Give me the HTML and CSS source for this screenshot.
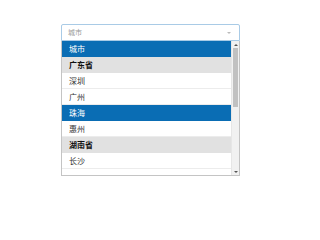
FILE: index.html
```html
<!DOCTYPE html>
<html lang="zh">
<head>
<meta charset="utf-8">
<link rel="stylesheet" href="styles.css">
</head>
<body>
<div class="wrap">
  <div class="select">
    <span class="placeholder">城市</span>
    <span class="arrow"></span>
  </div>
  <div class="dropdown">
    <ul class="list">
      <li class="opt hl">城市</li>
      <li class="opt group">广东省</li>
      <li class="opt">深圳</li>
      <li class="opt">广州</li>
      <li class="opt hl">珠海</li>
      <li class="opt">惠州</li>
      <li class="opt group">湖南省</li>
      <li class="opt">长沙</li>
    </ul>
    <div class="scrollbar">
      <div class="sb-btn"><span class="tri up"></span></div>
      <div class="sb-track"><div class="sb-thumb"></div></div>
      <div class="sb-btn"><span class="tri down"></span></div>
    </div>
  </div>
</div>
</body>
</html>
```

FILE: styles.css
```css
html, body {
  margin: 0;
  padding: 0;
  background: #ffffff;
}
body {
  font-family: "Noto Sans CJK SC", "Liberation Sans", sans-serif;
  color: #333333;
}
.wrap {
  margin: 24px 0 0 61px;
  width: 179px;
}
.select {
  height: 15px;
  border: 1px solid #a9cbe6;
  border-radius: 2px 2px 0 0;
  display: flex;
  align-items: center;
  justify-content: space-between;
  padding: 0 8px 0 6px;
  background: #fff;
}
.placeholder {
  font-size: 7px;
  color: #999999;
  line-height: 1;
}
.arrow {
  width: 0;
  height: 0;
  border-left: 2px solid transparent;
  border-right: 2px solid transparent;
  border-top: 2px solid #bbbbbb;
}
.dropdown {
  height: 134px;
  border: 1px solid #c4c4c4;
  border-top: none;
  display: flex;
  overflow: hidden;
  background: #fff;
}
.list {
  list-style: none;
  margin: 0;
  padding: 0;
  flex: 1;
  overflow: hidden;
}
.opt {
  height: 16px;
  line-height: 16px;
  font-size: 8px;
  padding-left: 7px;
  border-bottom: 1px solid #ececec;
  box-sizing: border-box;
  color: #333;
}
.opt.hl {
  background: #0a6db4;
  color: #ffffff;
  border-bottom-color: #0a6db4;
}
.opt.group {
  background: #e1e1e1;
  font-weight: bold;
  color: #111;
  border-bottom-color: #e1e1e1;
}
.scrollbar {
  width: 7px;
  display: flex;
  flex-direction: column;
  background: #f1f1f1;
  border-left: 1px solid #e6e6e6;
}
.sb-btn {
  height: 7px;
  display: flex;
  align-items: center;
  justify-content: center;
  background: #f1f1f1;
}
.tri {
  width: 0;
  height: 0;
  border-left: 2px solid transparent;
  border-right: 2px solid transparent;
}
.tri.up { border-bottom: 2px solid #555; }
.tri.down { border-top: 2px solid #555; }
.sb-track {
  flex: 1;
}
.sb-thumb {
  height: 59px;
  margin: 0 1px;
  background: #c1c1c1;
}
```
